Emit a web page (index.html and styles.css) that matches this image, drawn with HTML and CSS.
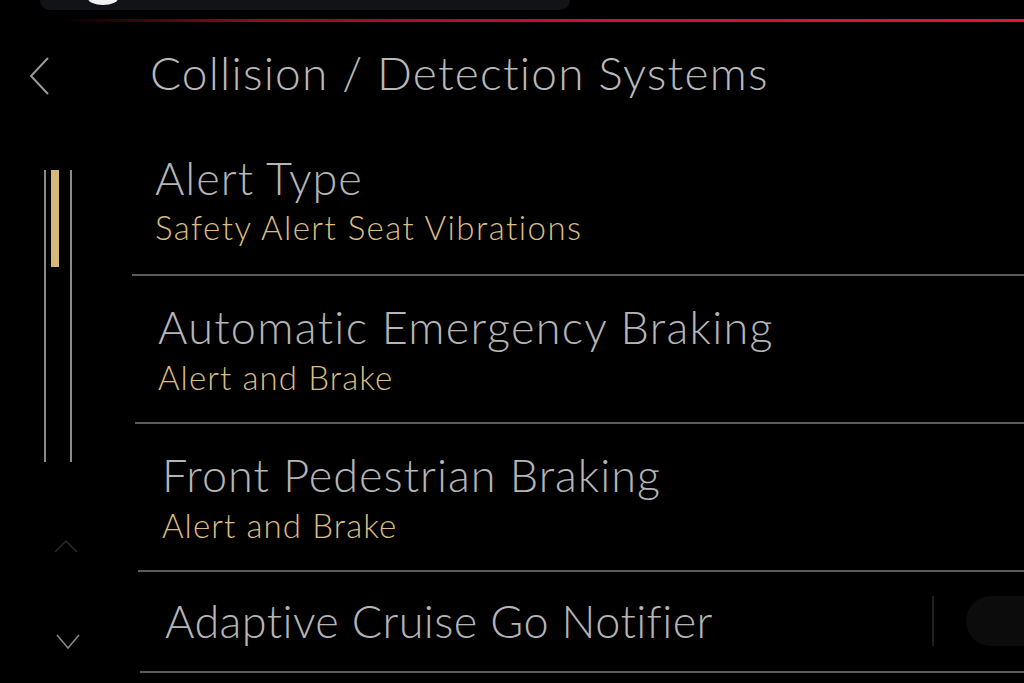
FILE: index.html
```html
<!DOCTYPE html>
<html>
<head>
<meta charset="utf-8">
<link rel="stylesheet" href="styles.css">
</head>
<body>
<div class="screen">
  <div class="top">
    <div class="pill"><span class="dot"></span></div>
    <div class="redline"></div>
  </div>
  <div class="main">
    <div class="side">
      <div class="back">
        <svg width="24" height="40" viewBox="0 0 24 40"><polyline points="20,2 3,20 20,38" fill="none" stroke="#9a9a9a" stroke-width="2"/></svg>
      </div>
      <div class="scroll">
        <div class="rail"></div>
        <div class="thumbcol"><div class="thumb"></div></div>
        <div class="rail"></div>
      </div>
      <div class="up">
        <svg width="26" height="16" viewBox="0 0 26 16"><polyline points="2,14 13,3 24,14" fill="none" stroke="#2a2a2a" stroke-width="1.5"/></svg>
      </div>
      <div class="down">
        <svg width="28" height="20" viewBox="0 0 28 20"><polyline points="3,3 14,16 25,3" fill="none" stroke="#8a8a8a" stroke-width="1.5"/></svg>
      </div>
    </div>
    <div class="content">
      <h1 class="title">Collision / Detection Systems</h1>
      <div class="list">
        <div class="row r1">
          <div class="name">Alert Type</div>
          <div class="value">Safety Alert Seat Vibrations</div>
        </div>
        <div class="row r2">
          <div class="name">Automatic Emergency Braking</div>
          <div class="value">Alert and Brake</div>
        </div>
        <div class="row r3">
          <div class="name">Front Pedestrian Braking</div>
          <div class="value">Alert and Brake</div>
        </div>
        <div class="row r4 single">
          <div class="name">Adaptive Cruise Go Notifier</div>
          <div class="toggle"><span class="vdiv"></span><span class="knob"></span></div>
        </div>
      </div>
    </div>
  </div>
</div>
</body>
</html>
```
FILE: styles.css
```css
html, body {
  margin: 0;
  padding: 0;
  background: #000;
}
.screen {
  width: 1024px;
  height: 683px;
  overflow: hidden;
  background: #000;
  font-family: Lato, "Open Sans", sans-serif;
  font-weight: 300;
}
.top {
  height: 40px;
  display: flex;
  flex-direction: column;
}
.pill {
  margin-left: 40px;
  width: 530px;
  height: 10px;
  background: #121317;
  border-radius: 0 0 12px 12px;
  position: relative;
}
.dot {
  position: absolute;
  left: 48px;
  top: -8px;
  width: 30px;
  height: 13px;
  border-radius: 50%;
  background: #f2f2f2;
}
.redline {
  margin-top: 9px;
  margin-left: 60px;
  height: 3px;
  background: linear-gradient(90deg, rgba(200,20,30,0) 0%, #9a0e18 20%, #d0172a 55%, #e41c2e 100%);
  opacity: 0.95;
}
.main {
  display: flex;
  height: 643px;
}
.side {
  width: 132px;
  flex: none;
  display: flex;
  flex-direction: column;
}
.back {
  margin: 16px 0 0 28px;
  height: 40px;
}
.scroll {
  margin: 74px 0 0 44px;
  height: 292px;
  display: flex;
  gap: 5px;
}
.scroll .thumbcol {
  margin-right: 6px;
}
.rail {
  width: 2px;
  background: #8a8a8a;
}
.thumbcol {
  width: 8px;
}
.thumb {
  height: 97px;
  background: #d6b77c;
}
.up {
  margin: 76px 0 0 53px;
  height: 16px;
}
.down {
  margin: 78px 0 0 54px;
  height: 20px;
}
.content {
  flex: 1;
  display: flex;
  flex-direction: column;
}
.title {
  margin: 7px 0 0 18px;
  font-size: 46px;
  font-weight: 300;
  color: #b9b9bb;
  line-height: 52px;
  letter-spacing: 1.2px;
}
.list {
  margin-top: 28px;
  display: flex;
  flex-direction: column;
}
.row {
  box-sizing: border-box;
  border-bottom: 2px solid #5c5c5c;
  padding: 26px 0 25px 23px;
  display: flex;
  flex-direction: column;
}
.r1 { margin-left: 0; padding-bottom: 27px; }
.r2 { margin-left: 3px; }
.r3 { margin-left: 6px; padding-left: 24px; }
.r4 { margin-left: 8px; padding-top: 24px; padding-bottom: 25px; padding-left: 25px; }
.name {
  font-size: 45px;
  line-height: 50px;
  color: #b5b5b8;
  letter-spacing: 1px;
}
.r2 .name { letter-spacing: 1.3px; }
.r4 .name { letter-spacing: 0.4px; }
.value {
  font-size: 33px;
  line-height: 40px;
  color: #dcbd84;
  letter-spacing: 1.1px;
  margin-top: 4px;
}
.r1 .value { letter-spacing: 1.45px; }
.r2 .value, .r3 .value { margin-top: 5px; }
.single {
  flex-direction: row;
  align-items: center;
  justify-content: space-between;
}
.toggle {
  display: flex;
  align-items: center;
  gap: 32px;
  height: 50px;
}
.vdiv {
  width: 2px;
  height: 50px;
  background: #1f1f1f;
}
.knob {
  width: 58px;
  height: 50px;
  border-radius: 25px 0 0 25px;
  background: #0c0c0c;
}
```
